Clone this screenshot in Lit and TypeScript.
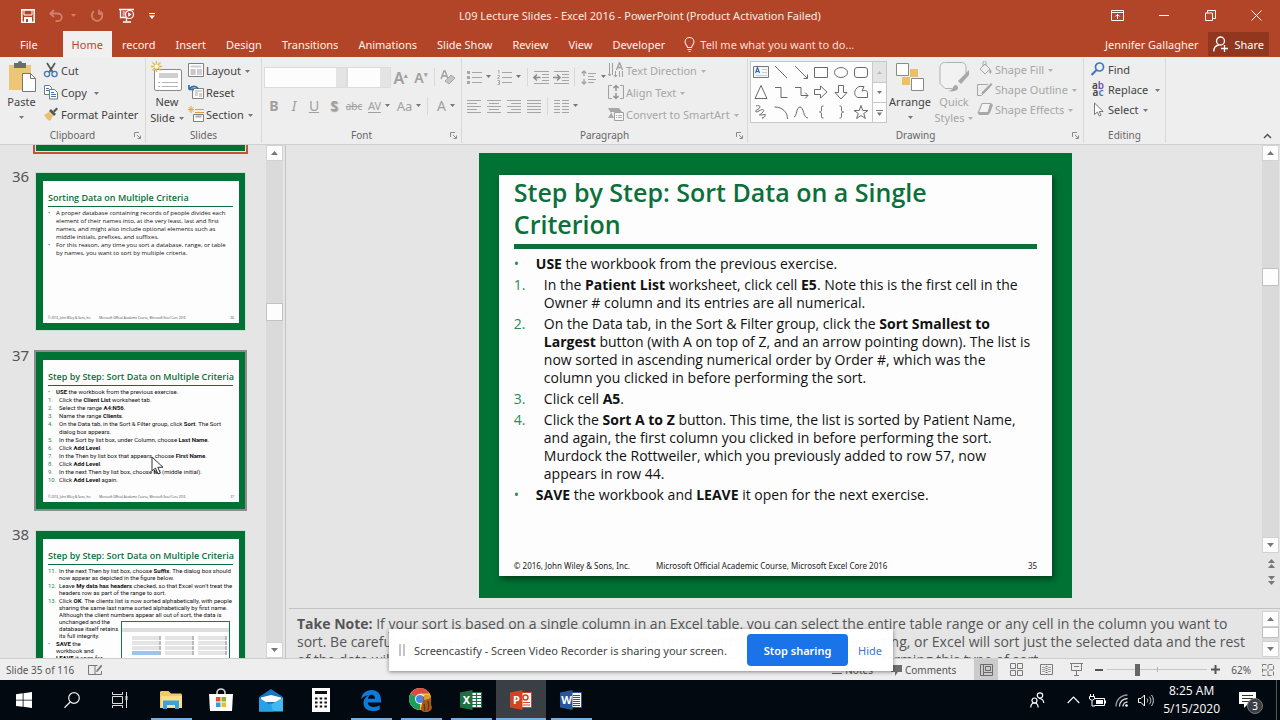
import { LitElement, html, css, svg, nothing } from "lit";
import type { TemplateResult } from "lit";
import { customElement, property } from "lit/decorators.js";
import { classMap } from "lit/directives/class-map.js";

const icon = (w: number, h: number, body: unknown) =>
  html`<svg width=${w} height=${h} viewBox="0 0 ${w} ${h}" fill="none" stroke-width="1" aria-hidden="true">${body}</svg>`;

const caret = html`<svg class="caret" width="5" height="3" viewBox="0 0 5 3" aria-hidden="true"><path d="M0 0h5L2.5 3z" fill="currentColor"/></svg>`;

const lines = (x: number, widths: number[], y: number, step: number, color = "#a6a6a6") =>
  widths.map((w, i) => svg`<path d="M${x} ${y + i * step}h${w}" stroke=${color}/>`);

const I = {
  save: icon(14, 14, svg`<path d="M.8.8h12.4v12.4H.8z" stroke="#fff" stroke-width="1.5"/><path d="M3 1h8v5H3z" stroke="#fff"/><path d="M3 8h8v5H3z" fill="#fff"/><path d="M5 10h2v3H5z" fill="#b24528"/>`),
  undo: icon(14, 13, svg`<path d="M5 1 1.2 4.5 5 8M1.5 4.5H9a3.8 3.8 0 0 1 0 7.6H6.500" stroke="#cf826d" stroke-width="1.800"/>`),
  redo: icon(14, 14, svg`<path d="M4 2.200A5.300 5.300 0 1 0 10.500 2.500M9 .5v4.300h4" stroke="#cf826d" stroke-width="1.800"/>`),
  show: icon(17, 15, svg`<path d="M1 1.500h15M2.500 2v7.500H8M8.500 10v3M5 14h8" stroke="#fff" stroke-width="1.300"/><path d="M4.500 4h3M4.500 6h3M4.500 8h2" stroke="#fff"/><circle cx="11.500" cy="6.500" r="4" fill="#b24528" stroke="#fff" stroke-width="1.200"/><path d="m10.200 4.300 3.500 2.200-3.500 2.200z" fill="#fff"/>`),
  more: icon(6, 6, svg`<path d="M0 .5h6" stroke="#fff"/><path d="M0 2.500h6L3 6z" fill="#fff"/>`),
  ribbonOpts: icon(13, 11, svg`<path d="M.5.5h12v10H.5zM.5 2.500h12M6.500 9V4.500M4.300 6.500l2.200-2.200 2.200 2.200" stroke="#fff"/>`),
  min: icon(11, 11, svg`<path d="M0 5.500h10" stroke="#fff"/>`),
  restore: icon(11, 11, svg`<path d="M.5 3h7v7.500h-7zM2.500 3V.5h8v8h-3" stroke="#fff"/>`),
  close: icon(11, 11, svg`<path d="m.5.5 10 10M10.500.5l-10 10" stroke="#fff"/>`),
  bulb: icon(11, 15, svg`<path d="M3.500 10.500C3.500 8.500 1 7.500 1 5a4.500 4.500 0 0 1 9 0c0 2.500-2.500 3.500-2.500 5.500zM3.500 12.500h4M4.500 14.500h2" stroke="#fbe3dc" stroke-width="1.100"/>`),
  share: icon(16, 16, svg`<circle cx="7.500" cy="5" r="4" stroke="#fff" stroke-width="1.300"/><path d="M.8 15.500c0-4 2-6 5-6.500M11.500 9v7M8 12.500h7" stroke="#fff" stroke-width="1.300"/>`),
  paste: icon(28, 31, svg`<path d="M1 4h22v25H1z" fill="#ecc575"/><path d="M6 2h4a2 2 0 0 1 4 0h4v5H6z" fill="#6b6b6b"/><path d="M14.500 12.500h8l5 5v13h-13z" fill="#fff" stroke="#777"/><path d="M22.500 12.500v5h5" stroke="#777"/>`),
  cut: icon(16, 16, svg`<path d="m4 1 6 9.500M12 1 6 10.500" stroke="#555" stroke-width="1.700"/><circle cx="4" cy="12" r="2.600" stroke="#3f78b8" stroke-width="1.300"/><circle cx="11.500" cy="12" r="2.600" stroke="#3f78b8" stroke-width="1.300"/>`),
  copy: icon(16, 16, svg`<path d="M1.500 1.500h5l2 2v7h-7z" fill="#fff" stroke="#777"/><path d="M3 4.500h3M3 6.500h4" stroke="#3f78b8"/><path d="M6.500 5.500h5l3 3v6.500h-8z" fill="#fff" stroke="#777"/><path d="M8 8.500h3M8 10.500h5M8 12.500h5" stroke="#3f78b8"/>`),
  painter: icon(16, 16, svg`<path d="m1 9 5-3 4 4-3 5c-3-1-4-3-6-6z" fill="#ecc06a"/><path d="m6 5 2-2 5 5-2 2z" fill="#555"/><path d="m10 5 3.500-3.500 1.500 1.500-3.500 3.500z" fill="#555"/>`),
  newSlide: icon(32, 32, svg`<rect x="3.500" y="8.500" width="27" height="21" rx="1.500" fill="#fff" stroke="#8a8a8a"/><path d="M8 12h19v5H8z" fill="#d0d0d0"/><path d="M7 21.500h2M11 21.500h16M7 25.500h2M11 25.500h16" stroke="#b5b5b5"/><path d="M5.500 0v11M0 5.500h11M1.500 1.500l8 8M9.500 1.500l-8 8" stroke="#e8b64c" stroke-width="1.300"/><circle cx="5.500" cy="5.500" r="2" fill="#fff"/>`),
  layout: icon(16, 14, svg`<path d="M.5.5h15v13H.5z" fill="#fff" stroke="#808080"/><path d="M2.500 2.500h11v2h-11zM9 6h5v6H9z" fill="#cfcfcf"/><path d="M2.500 7h5M2.500 9h5M2.500 11h5" stroke="#8f8f8f"/>`),
  reset: icon(16, 15, svg`<path d="M4.500 3.500h11v10h-11z" fill="#fff" stroke="#808080"/><path d="M7 6h7M7 8h3M7 10h3" stroke="#aaa"/><path d="M11 8h3v4h-3z" fill="#cfcfcf"/><path d="M1 4.500h5M1 4.500V0M1.500 4C4 .5 8 .5 10 3.500" stroke="#2f6db3" stroke-width="1.700"/>`),
  section: icon(16, 16, svg`<path d="M7 3.500h9M7 6.500h9" stroke="#e2994b"/><path d="M5.500 8.500h10v7h-10z" fill="#fff" stroke="#808080"/><path d="M7.500 10.500h6" stroke="#aaa" stroke-width="2"/><path d="M3 0v7M0 3.500h6M.8 1.200l4.500 4.500M5.300 1.200.8 5.700" stroke="#e2a64b"/>`),
  launcher: icon(7, 7, svg`<path d="M.5 5V.5H5M3 3l3 3M6.500 3.500v3h-3" stroke="#8a8a8a"/>`),
  eraser: icon(16, 16, svg`<path d="M1 10 4 2h1l3 8M2.300 7h4.400" stroke="#9c9c9c" stroke-width="1.300"/><path d="m5 12 6-6 4 3-6 6z" fill="#c4c4c4" stroke="#a6a6a6"/>`),
  bullets: icon(15, 15, svg`<path d="M0 1h3v3H0zM0 6h3v3H0zM0 11h3v3H0z" fill="#a6a6a6"/>${lines(5, [10, 10, 10], 2.5, 5)}`),
  numbers: icon(15, 15, svg`<path d="M1 .5h1v3M.5 5.500h2v1l-2 2h2M.5 10.500h2v4h-2M1 12.500h1" stroke="#a6a6a6"/>${lines(5, [10, 10, 10], 2.5, 5)}`),
  dedent: icon(16, 15, svg`${lines(1, [15], 1.5, 3)}${lines(9, [7, 7, 7], 4.5, 3)}${lines(1, [15], 13.5, 3)}<path d="M7.500 7.500H1M4 4.500l-3 3 3 3" stroke="#8c8c8c" stroke-width="1.600"/>`),
  indent: icon(16, 15, svg`${lines(1, [15], 1.5, 3)}${lines(9, [7, 7, 7], 4.5, 3)}${lines(1, [15], 13.5, 3)}<path d="M0 7.500h6.500M4 4.500l3 3-3 3" stroke="#8c8c8c" stroke-width="1.600"/>`),
  spacing: icon(16, 15, svg`<path d="M3 1v5M.8 3.200 3 1l2.200 2.200M3 14V9M.8 11.800 3 14l2.200-2.200" stroke="#a0a0a0" stroke-width="1.300"/>${lines(7, [8, 6, 8, 6], 3.5, 3)}`),
  left: icon(14, 15, lines(0, [14, 10, 14, 10, 14], 1.5, 3)),
  center: icon(14, 15, svg`${lines(0, [14, 0, 14, 0, 14], 1.5, 3)}${lines(2, [10], 4.5, 3)}${lines(2, [10], 10.5, 3)}`),
  right: icon(14, 15, svg`${lines(0, [14, 0, 14, 0, 14], 1.5, 3)}${lines(4, [10], 4.5, 3)}${lines(4, [10], 10.5, 3)}`),
  justify: icon(14, 15, lines(0, [14, 14, 14, 14, 14], 1.5, 3)),
  columns: icon(15, 15, svg`${lines(0, [6, 6, 6, 6, 6], 1.5, 3)}${lines(8, [7, 7, 7, 7, 7], 1.5, 3)}`),
  textDir: icon(16, 16, svg`<path d="M1.500 1v12M4.500 1v12M7.500 9v6M11.500 9v6M14.500 9v6M0 12l1.500 2L3 12M6 13l1.500 2L9 13" stroke="#a0a0a0"/><path d="M8.500 8 11.500.5 14.500 8M9.500 5.500h4" stroke="#a0a0a0" stroke-width="1.300"/>`),
  alignText: icon(16, 16, svg`<path d="M4 1.500H.5v13H4M12 1.500h3.500v13H12" stroke="#a0a0a0"/><path d="M8 7V1.500M5.500 4 8 1.500 10.500 4M8 9v5.500M5.500 12 8 14.500l2.500-2.500" stroke="#8f8f8f" stroke-width="1.400"/>`),
  smartArt: icon(16, 14, svg`<path d="M0 1h11l3 4H3l3 6H0l3-5z" fill="#a8a8a8"/><path d="M6.500 5.500h9v8h-9z" fill="#f6f6f6" stroke="#a0a0a0"/><path d="M8 8.500h1M10 8.500h4M8 10.500h1M10 10.500h4" stroke="#b0b0b0"/>`),
  arrange: icon(28, 28, svg`<path d="M14 6h8v8h-8zM6 14h8v8H6z" fill="#e9c06c"/><path d="M.5.5h12v12H.5zM15.500 15.500h12v12h-12z" fill="#fff" stroke="#8a8a8a"/>`),
  quick: icon(32, 32, svg`<path d="M14 27.500H7l-5-5V7c0-4 2-5.500 5.500-5.500H23c4 0 5 2 5 5.500v6" stroke="#b0b0b0" fill="#f2f2f2"/><path d="M31 9 20 20l3 3 8-9z" fill="#a8a8a8"/><path d="M10 30c5 0 4-4 7-6 3 0 4 3 2 5-2 1-5 2-9 1z" fill="#a8a8a8"/>`),
  fill: icon(16, 16, svg`<path d="m3 8 5-5 5 5-5 5zM6 5V1.500a1 1 0 0 1 3 0V5" stroke="#a6a6a6"/><path d="M13 8c2 2 2 4 .5 4.500S12 10 13 8z" fill="#a6a6a6"/>`),
  outline: icon(16, 14, svg`<path d="M11 2.500H.5v11h4l8-8" stroke="#a6a6a6"/><path d="m5 10 9-9 1.500 1.500-8 8.500-3 1z" fill="#a6a6a6"/>`),
  effects: icon(16, 14, svg`<path d="M5 1h9l2 2-3 8-2 2H2L.5 11z" fill="#a8a8a8"/><path d="M5 1.500h8.500L11 10.500H1.500z" fill="#f4f4f4" stroke="#a8a8a8"/>`),
  find: icon(14, 14, svg`<circle cx="8.500" cy="5" r="4" stroke="#3f78b8" stroke-width="1.700"/><path d="m5.500 8-5 5" stroke="#3f78b8" stroke-width="2.200"/>`),
  select: icon(11, 15, svg`<path d="M1.500 1v11.500l3-2.500 1.700 4 1.800-.8L6.300 9.500h3.900z" fill="#fff" stroke="#777"/>`),
  up: icon(9, 6, svg`<path d="m1 5 3.500-3.500L8 5" stroke="#555" stroke-width="1.500"/>`),
  book: icon(15, 12, svg`<path d="M7 1.500H.5v9H7zM7 1.500h2.500M7 10.500h6.500V7" stroke="#777"/><path d="m8 8 .7-2L13 .8 14.300 2 9.800 7.400z" fill="#777"/>`),
  notes: icon(10, 9, svg`<path d="M5 0 2 3h6zM0 5.500h10M0 8.500h10" stroke="#666"/>`),
  comment: icon(11, 12, svg`<path d="M0 1h11v7H7l-3 4V8H0z" fill="#6e6e6e"/>`),
  normal: icon(13, 12, svg`<path d="M.5.5h12v11H.5zM3.500.5v11M5.500 2.500h5v4h-5zM4 8.500h8" stroke="#6a6a6a"/>`),
  sorter: icon(13, 13, svg`<path d="M.5.5h5v5h-5zM7.500.5h5v5h-5zM.5 7.500h5v5h-5zM7.500 7.500h5v5h-5z" stroke="#7a7a7a"/>`),
  reading: icon(13, 13, svg`<path d="M5.500 1.500h-5v10h5M7.500 1.500h5v10h-5" stroke="#7a7a7a"/><path d="M6.500 1v12" stroke="#6a6a6a" stroke-width="2" stroke-dasharray="1 1"/><path d="M2 4.500h3M2 6.500h3M2 8.500h3M8 4.500h3M8 6.500h3M8 8.500h3" stroke="#a0a0a0"/>`),
  slideshow: icon(13, 13, svg`<path d="M0 .5h13M1.500 1v6.500h10V1M4 3.500h5M6.500 8v4M4 12.500h5" stroke="#7a7a7a"/>`),
  fit: icon(12, 12, svg`<path d="M.5.5h11v11H.5z" stroke="#7a7a7a" stroke-dasharray="4 2"/><path d="M6 1v4M6 7v4M1 6h4M7 6h4" stroke="#7a7a7a"/>`),
  cursor: icon(13, 19, svg`<path d="M1 1v14l3.500-3 2.500 6 2.300-1-2.500-5.700H12z" fill="#fff" stroke="#333"/>`),
  win: icon(16, 16, svg`<path d="M0 2.200 6.700 1.300V7.700H0zM7.500 1.200 16 0v7.700H7.500zM0 8.500h6.700v6.300L0 13.900zM7.500 8.500H16V16l-8.500-1.200z" fill="#fff"/>`),
  search: icon(16, 16, svg`<circle cx="10" cy="6" r="5.300" stroke="#eee" stroke-width="1.200"/><path d="M6.200 10 .5 15.700" stroke="#eee" stroke-width="1.300"/>`),
  taskview: icon(16, 16, svg`<path d="M.5 0v2.500h10V0M.5 4.500h10v7H.500zM.5 16v-2.500h10V16M14.500 0v16" stroke="#ddd"/><path d="M13.500 4h2v4h-2z" fill="#ddd"/>`),
  folder: icon(22, 19, svg`<path d="M0 1.500C0 .7.700 0 1.500 0h7L11 2.500h9.500c.8 0 1.500.7 1.500 1.500v13H0z" fill="#f0cb63"/><path d="M1 5h21v12H1z" fill="#fbe08c"/><path d="M3 18V9.500h16V18h-4v-4H7v4z" fill="#36a3dc"/>`),
  store: icon(24, 24, svg`<path d="M8 7V5a4 4 0 0 1 8 0v2" stroke="#d8d8d8" stroke-width="1.600"/><path d="M0 6h24l-1 17H1z" fill="#fff"/><path d="M7 9h4.500v4.500H7z" fill="#e8502c"/><path d="M12.500 9H17v4.500h-4.500z" fill="#7db928"/><path d="M7 14.500h4.500V19H7z" fill="#2d9fe0"/><path d="M12.500 14.500H17V19h-4.500z" fill="#f4b71e"/>`),
  mail: icon(24, 23, svg`<path d="M0 8 12 0l12 8v14H0z" fill="#1478c4"/><path d="M2 8.500 12 6l10 2.500V13H2z" fill="#fff"/><path d="m0 8.500 12 8L0 22.500z" fill="#2aa0e8"/><path d="M0 22.500 24 8.500v14z" fill="#41b8f2"/><path d="m12 14-12 8.500h14z" fill="#2aa0e8"/>`),
  calc: icon(18, 24, svg`<path d="M0 0h18v24H0z" fill="#fff"/><path d="M3 3h12v3H3z" fill="#111"/><path d="M3 10.500h12M3 14.500h12M3 18.500h12" stroke="#111" stroke-width="2" stroke-dasharray="2.500 2.200"/>`),
  edge: icon(20, 21, svg`<path d="M0 9.500C.8 3.500 5 0 10.500 0 16.500 0 20 4.300 20 10v2.500H6.800c.2 3 2.700 4.400 5.900 4.400 2.200 0 4.300-.6 6-1.600v4.200c-1.900 1-4.300 1.500-7 1.500C5.800 21 2.500 17.500 2.500 13c0-3.500 1.800-6 4.800-7.500C4.500 5.600 1.800 7 0 9.500zM7 8.700h7c0-2.300-1.200-4-3.500-4C8.500 4.700 7.200 6.500 7 8.700z" fill="#0f7bd8"/>`),
  chrome: icon(24, 24, svg`<circle cx="11" cy="11" r="11" fill="#e5e5e5"/><path d="M11 11 1.500 5.500A11 11 0 0 1 20.500 5.500z" fill="#dd4b3e"/><path d="M11 11 1.500 5.500A11 11 0 0 0 11 22z" fill="#1c9d58"/><path d="M11 11V22A11 11 0 0 0 20.500 5.500H11z" fill="#f4c531"/><circle cx="11" cy="11" r="5" fill="#fff"/><circle cx="11" cy="11" r="4" fill="#4a86e8"/><path d="M14 9c3-3 7-2 8 1 1 4-1 5 1 9 0 3-3 5-6 5-4 0-6-2-5-5 2-2 0-4 2-6z" fill="#a65a22"/><path d="M15 8c3-2 6-1 7 1l-2 2-5 1z" fill="#d9a020"/><path d="M15 16c1 3 0 5 1 7M19 13c1 3 1 6 0 9" stroke="#6f3412" stroke-width="1.500"/>`),
  people: icon(15, 16, svg`<circle cx="10" cy="3.500" r="2.700" stroke="#fff" stroke-width="1.200"/><circle cx="4.500" cy="8.500" r="2.500" stroke="#fff" stroke-width="1.200"/><path d="M.8 15.500c0-3 1.500-4.500 3.700-4.500s3.500 1.500 3.700 4.500M9 6.500c3 0 4.500 1.500 4.800 4.500" stroke="#fff" stroke-width="1.200"/>`),
  chevUp: icon(13, 8, svg`<path d="m.7 7 5.800-6 5.800 6" stroke="#fff" stroke-width="1.100"/>`),
  battery: icon(17, 13, svg`<path d="M6 4.500h9.500v7H5.500" stroke="#fff"/><path d="M7 6h7v4H7z" fill="#fff"/><path d="M16 6.500h1v3h-1z" fill="#fff"/><path d="M1.500 0v2M4.500 0v2M.5 2.500h5V5L3 6.500.500 5zM3 6.500V12h3" stroke="#fff"/>`),
  wifi: icon(14, 13, svg`<path d="M1 12.500C1 6 6 1 12.500 1" stroke="#9a9a9a" stroke-width="1.300"/><path d="M4.500 12.500c0-4.500 3.500-8 8-8M8 12.500c0-2.500 2-4.500 4.500-4.500" stroke="#ddd" stroke-width="1.300"/><circle cx="11.500" cy="11.500" r="1.300" fill="#fff"/>`),
  volume: icon(16, 13, svg`<path d="M.5 4.500H3L6.500 1v11L3 8.500H.500z" stroke="#fff"/><path d="M9 4.500c1 1.300 1 2.700 0 4M11.300 2.700c2 2.500 2 5 0 7.600M13.500 1c2.500 3.500 2.500 7.500 0 11" stroke="#ddd"/>`),
  action: icon(17, 16, svg`<path d="M0 0h17v12H9l-4 4v-4H0z" fill="#fff"/><path d="M3 3.500h11M3 6.500h11M3 9.500h7" stroke="#333"/>`),
};

const office = (letter: string, color: string, kind: string) => html`
  <span class="office">
    <svg width="22" height="20" viewBox="0 0 22 20" fill="none" aria-hidden="true">
      <path d="M10 2.500h11.500v15H10z" fill="#fff" stroke=${color}/>
      ${kind === "x" ? svg`<path d="M12 5.500h9M12 8.500h9M12 11.500h9M12 14.500h9M16.500 3v14" stroke=${color} stroke-width="1.200"/>` : nothing}
      ${kind === "p" ? svg`<circle cx="15.500" cy="7.500" r="2.500" stroke=${color} stroke-width="1.500"/><path d="M13 12.500h7M13 15h7" stroke=${color} stroke-width="1.200"/>` : nothing}
      ${kind === "w" ? svg`<path d="M13 5.500h7M13 7.500h7M13 9.500h7M13 11.500h7M13 13.500h7M13 15.500h7" stroke=${color}/>` : nothing}
      <path d="M0 2.500 12.500 0v20L0 17.500z" fill=${color}/>
    </svg><b>${letter}</b>
  </span>`;

const shape = (body: unknown) => svg`<g stroke="#6a6a6a">${body}</g>`;
const SHAPES: [string, unknown][] = [
  ["Text box", svg`<path d="M.5 2.500h15v11H.500z" stroke="#777" fill="#f4f8fc"/><path d="m2.500 9 2-5.500 2 5.500M3.300 7.500h2.400" stroke="#2f6db3" stroke-width="1.200"/><path d="M9 5.500h5M9 8.500h5M3 11.500h11" stroke="#ccc"/>`],
  ["Line", shape(svg`<path d="m2 2 12 12"/>`)],
  ["Arrow", shape(svg`<path d="m2 2 12 12M14.500 10.500v4h-4"/>`)],
  ["Rectangle", shape(svg`<path d="M1.500 3.500h13v10h-13z"/>`)],
  ["Oval", shape(svg`<ellipse cx="8" cy="8.500" rx="6.500" ry="5"/>`)],
  ["Rounded rectangle", shape(svg`<rect x="1.500" y="3.500" width="13" height="10" rx="2.500"/>`)],
  ["Triangle", shape(svg`<path d="M8 1.500 14 14.500H2z"/>`)],
  ["Elbow connector", shape(svg`<path d="M2 3.500h6v10h6.500"/>`)],
  ["Elbow arrow", shape(svg`<path d="M2 3.500h6v8h7M12 8.500l3 3-3 3"/>`)],
  ["Right arrow", shape(svg`<path d="M1.500 5.500h6V2l6.500 6-6.500 6v-3.500h-6z"/>`)],
  ["Down arrow", shape(svg`<path d="M5.500 1.500h5v7H14L8 15 2 8.500h3.500z"/>`)],
  ["Freeform", shape(svg`<path d="M6 2.500h5L9 7c3-1 6-1 5.500 3v3.500h-10c-4-2-4-8 1.500-11z"/>`)],
  ["Scribble", shape(svg`<path d="M3 2c6-2 4 3 1 4s-1 3 2 1 6-2 4 1-6 3-2 3 5-2 4 1-4 0-2 3"/>`)],
  ["Arc", shape(svg`<path d="M1.500 3c8 0 13 5 13 12"/>`)],
  ["Curve", shape(svg`<path d="M1 13C4 13 3 3 7 3s3 11 8 11"/>`)],
  ["Left brace", shape(svg`<path d="M10.500 2C8 2 8.500 3 8.500 5S8.500 8 6.500 8c2 0 2 1 2 3s-.5 3 2 3"/>`)],
  ["Right brace", shape(svg`<path d="M6.500 2C9 2 8.500 3 8.500 5s0 3 2 3c-2 0-2 1-2 3s.5 3-2 3"/>`)],
  ["Star", shape(svg`<path d="m8 1.500 1.700 5h5.300l-4.300 3 1.700 5L8 11.500l-4.400 3 1.700-5L1 6.500h5.300z"/>`)],
];

const base = css`
  * { box-sizing: border-box; }
  button { font: inherit; color: inherit; background: none; border: 0; padding: 0; margin: 0; cursor: default; }
  svg { display: block; flex: none; }
`;

/** A vertical scroll bar: two arrow buttons and a thumb on a track. */
@customElement("scroll-bar")
export class ScrollBar extends LitElement {
  @property({ type: Number }) before = 1;
  @property({ type: Number }) after = 1;
  @property({ type: Boolean }) short = false;
  static styles = [base, css`
    :host { display: flex; flex-direction: column; width: 18px; min-height: 0; }
    button, .thumb { width: 17px; height: 16px; flex: none; background: #fdfdfd; border: 1px solid #d2d2d2; display: grid; place-items: center; }
    .thumb { height: 18px; border-color: #c2c2c2; }
    .thumb.short { height: 11px; }
    .track { flex: 1; min-height: 0; background: #dadada; width: 17px; display: flex; flex-direction: column; }
  `];
  render() {
    return html`
      <button aria-label="Scroll up">${icon(7, 4, svg`<path d="M0 4h7L3.500 0z" fill="#777"/>`)}</button>
      <div class="track">
        <span style="flex: ${this.before}"></span>
        <span class=${classMap({ thumb: true, short: this.short })}></span>
        <span style="flex: ${this.after}"></span>
      </div>
      <button aria-label="Scroll down">${icon(7, 4, svg`<path d="M0 0h7L3.500 4z" fill="#777"/>`)}</button>`;
  }
}

type Item = { mark: string; body: unknown };

/** The deck's slide master: green frame, white page, title, rule, list and footer. */
const slidePage = (title: unknown, items: Item[], page: string, figure: unknown = nothing) => html`
  <div class="page">
    <h2>${title}</h2>
    <ul>${items.map(i => html`<li class=${classMap({ dot: i.mark === "•" })}><span class="mark">${i.mark}</span><span>${i.body}</span></li>`)}</ul>
    ${figure}
    <footer><span>© 2016, John Wiley &amp; Sons, Inc.</span><span class="course">Microsoft Official Academic Course, Microsoft Excel Core 2016</span><span>${page}</span></footer>
  </div>`;

const pageStyles = css`
  .page { background: #fdfdfd; height: 100%; display: flex; flex-direction: column; position: relative; font-family: "Open Sans", "Noto Sans", sans-serif; }
  h2 { margin: 0; color: #0b703a; font-weight: 600; white-space: nowrap; }
  ul { list-style: none; margin: 0; padding: 0; display: flex; flex-direction: column; color: #111; flex: 1; min-height: 0; }
  li { display: flex; white-space: nowrap; }
  .mark { color: #2d8a57; flex: none; }
  footer { display: flex; color: #222; white-space: nowrap; }
  footer .course { flex: 1; }
`;

@customElement("slide-thumbs")
export class SlideThumbs extends LitElement {
  static styles = [base, pageStyles, css`
    :host { display: block; flex: 1; min-width: 0; overflow: hidden; }
    ol { list-style: none; margin: 0; padding: 0 21px 0 0; display: flex; flex-direction: column; gap: 22px; }
    .item { display: grid; grid-template-columns: 36px minmax(0, 1fr); }
    .no { font-size: 15px; line-height: 18px; padding-left: 12px; color: #555; margin-top: -6px; }
    .frame { height: 157px; background: #007233; padding: 8px 6px 7px 7px; position: relative; outline: 1px solid #c9e0d2; }
    .frame.hover { outline: 2px solid #8c8c8c; }
    .frame.current { outline: 2px solid #c65338; outline-offset: 1px; }
    .page { padding: 11px 5px 1px; overflow: hidden; }
    h2 { font-size: 9px; line-height: 12px; border-bottom: 1px solid #0b703a; padding: 0 0 2px 0; margin: 0 1px 2px 0; }
    li { font-size: 6px; line-height: 8px; }
    .mark { width: 11px; }
    li.dot .mark { width: 8px; }
    .dense li { font-family: Roboto, "Liberation Sans", sans-serif; }
    .tight ul { gap: 1px; }
    .tight li { line-height: 7px; }
    footer { font-size: 3px; line-height: 8px; color: #444; gap: 8px; }
    .pointer { position: absolute; left: 115px; top: 104px; }
    .dialog { position: absolute; left: 78px; right: 9px; top: 82px; height: 54px; border: 1px solid #0b8048; background: #fff; display: flex; flex-direction: column; gap: 2px; }
    .bar { height: 4px; background: #dedede; margin-top: 6px; }
    .cols { display: grid; grid-template-columns: 1fr 1fr 1fr; gap: 1px 4px; padding: 2px 2px 0 10px; }
    .cols i { height: 4px; background: #e4e4e4; border-right: 2px solid #bbb; }
    .cols i.on { background: #9fc3ea; }
  `];

  firstUpdated() { this.scrollTop = 151; }

  render() {
    const b = (t: string) => html`<b>${t}</b>`;
    return html`<ol>
      <li class="item"><span class="no"></span><div class="frame current"></div></li>
      <li class="item"><span class="no">36</span><div class="frame">${slidePage("Sorting Data on Multiple Criteria", [
        { mark: "•", body: html`A proper database containing records of people divides each<br>element of their names into, at the very least, last and first<br>names, and might also include optional elements such as<br>middle initials, prefixes, and suffixes.` },
        { mark: "•", body: html`For this reason, any time you sort a database, range, or table<br>by names, you want to sort by multiple criteria.` },
      ], "36")}</div></li>
      <li class="item"><span class="no">37</span><div class="frame hover dense">${slidePage("Step by Step: Sort Data on Multiple Criteria", [
        { mark: "•", body: html`${b("USE")} the workbook from the previous exercise.` },
        { mark: "1.", body: html`Click the ${b("Client List")} worksheet tab.` },
        { mark: "2.", body: html`Select the range ${b("A4:N56")}.` },
        { mark: "3.", body: html`Name the range ${b("Clients")}.` },
        { mark: "4.", body: html`On the Data tab, in the Sort &amp; Filter group, click ${b("Sort")}. The Sort<br>dialog box appears.` },
        { mark: "5.", body: html`In the Sort by list box, under Column, choose ${b("Last Name")}.` },
        { mark: "6.", body: html`Click ${b("Add Level")}.` },
        { mark: "7.", body: html`In the Then by list box that appears, choose ${b("First Name")}.` },
        { mark: "8.", body: html`Click ${b("Add Level")}.` },
        { mark: "9.", body: html`In the next Then by list box, choose ${b("MI")} (middle initial).` },
        { mark: "10.", body: html`Click ${b("Add Level")} again.` },
      ], "37")}<span class="pointer">${I.cursor}</span></div></li>
      <li class="item"><span class="no">38</span><div class="frame dense tight">${slidePage("Step by Step: Sort Data on Multiple Criteria", [
        { mark: "11.", body: html`In the next Then by list box, choose ${b("Suffix")}. The dialog box should<br>now appear as depicted in the figure below.` },
        { mark: "12.", body: html`Leave ${b("My data has headers")} checked, so that Excel won’t treat the<br>headers row as part of the range to sort.` },
        { mark: "13.", body: html`Click ${b("OK")}. The clients list is now sorted alphabetically, with people<br>sharing the same last name sorted alphabetically by first name.<br>Although the client numbers appear all out of sort, the data is<br>unchanged and the<br>database itself retains<br>its full integrity.` },
        { mark: "•", body: html`${b("SAVE")} the<br>workbook and<br>${b("LEAVE")} it open for` },
      ], "38", html`<div class="dialog"><div class="bar"></div><div class="cols">${Array.from({ length: 12 }, (_, n) => html`<i class=${classMap({ on: n === 9 })}></i>`)}</div></div>`)}</div></li>
    </ol>`;
  }
}

@customElement("slide-canvas")
export class SlideCanvas extends LitElement {
  static styles = [base, pageStyles, css`
    :host { display: block; height: 100%; aspect-ratio: 4 / 3; background: #007233; padding: 22px 20px; }
    .page { padding: 1px 15px 1px; box-shadow: 2px 3px 6px #00401c; }
    h2 { font-size: 25px; line-height: 32px; padding: 0 0 4px; border-bottom: 5px solid #0b703a; margin: 0 0 6px; }
    ul { gap: 3px; }
    li { font-size: 14px; line-height: 18px; }
    .mark { width: 30px; }
    li.dot .mark { width: 22px; }
    footer { font-family: "Noto Sans", sans-serif; font-size: 8px; line-height: 18px; gap: 26px; }
  `];
  render() {
    const b = (t: string) => html`<b>${t}</b>`;
    return slidePage(html`Step by Step: Sort Data on a Single<br>Criterion`, [
      { mark: "•", body: html`${b("USE")} the workbook from the previous exercise.` },
      { mark: "1.", body: html`In the ${b("Patient List")} worksheet, click cell ${b("E5")}. Note this is the first cell in the<br>Owner # column and its entries are all numerical.` },
      { mark: "2.", body: html`On the Data tab, in the Sort &amp; Filter group, click the ${b("Sort Smallest to")}<br>${b("Largest")} button (with A on top of Z, and an arrow pointing down). The list is<br>now sorted in ascending numerical order by Order #, which was the<br>column you clicked in before performing the sort.` },
      { mark: "3.", body: html`Click cell ${b("A5")}.` },
      { mark: "4.", body: html`Click the ${b("Sort A to Z")} button. This time, the list is sorted by Patient Name,<br>and again, the first column you clicked in before performing the sort.<br>Murdock the Rottweiler, which you previously added to row 57, now<br>appears in row 44.` },
      { mark: "•", body: html`${b("SAVE")} the workbook and ${b("LEAVE")} it open for the next exercise.` },
    ], "35");
  }
}

@customElement("ribbon-bar")
export class RibbonBar extends LitElement {
  static styles = [base, css`
    :host { display: flex; height: 88px; background: #eeeeee; color: #444; border-bottom: 1px solid #d0d0d0; font-size: 11px; }
    .caret { display: inline-block; margin: 0 0 2px 4px; color: #777; }
    .group { display: grid; grid-template-rows: minmax(0, 1fr) 16px; border-right: 1px solid #d8d8d8; padding-top: 1px; margin: 1px 0; }
    .body { display: flex; min-width: 0; }
    .label { position: relative; display: flex; justify-content: center; align-items: center; font-size: 10px; color: #666; }
    .label button { position: absolute; right: 4px; top: 5px; }
    .list { display: flex; flex-direction: column; }
    .list button { height: 22px; display: flex; align-items: center; gap: 2px; white-space: nowrap; }
    .list.drawing button { height: 20px; }
    .list .ic { width: 16px; display: grid; place-items: center; }
    .big { display: flex; flex-direction: column; align-items: center; line-height: 16px; white-space: nowrap; }
    .big .pic { height: 35px; display: grid; place-items: center; }
    .big > .caret { margin: 6px 0 0; }
    .off { color: #a6a6a6; }
    .off .caret { color: #b0b0b0; }
    .rows { display: flex; flex-direction: column; gap: 9px; padding-top: 8px; color: #a0a0a0; }
    .row { display: flex; align-items: center; height: 20px; }
    .row button { width: 20px; height: 20px; display: grid; place-items: center; flex: none; white-space: nowrap; }
    .row .wide { width: 30px; display: flex; align-items: center; justify-content: center; }
    .row .sep { width: 1px; height: 18px; background: #d8d8d8; margin: 0 3px; }
    .letters { font-size: 14px; line-height: 20px; }
    .letters .strike { font-size: 10px; text-decoration: line-through; }
    .shadow { text-shadow: 1px 1px 1px #aaa; }
    .und { text-decoration: underline; }
    .av { font-size: 11px; border-bottom: 1px solid; line-height: 13px; }
    .aa { font-size: 13px; }
    .grow { font-size: 16px; font-weight: 600; }
    .shrink { font-size: 14px; font-weight: 600; }
    sup { font-size: 7px; line-height: 0; }
    .combo { appearance: none; height: 21px; border: 1px solid #dcdcdc; border-radius: 0; }
    .combo { background: linear-gradient(#e4e4e4, #e4e4e4) right / 10px 100% no-repeat, #fdfdfd; }
    .font-name { width: 83px; }
    .font-size { width: 44px; }
    .gallery { display: grid; grid-template-columns: 121px 14px; border: 1px solid #c8c8c8; background: #fdfdfd; height: 62px; margin-top: 2px; }
    .shapes { display: grid; grid-template-columns: repeat(6, 20px); grid-auto-rows: 20px; }
    .shapes button, .nav button { display: grid; place-items: center; }
    .nav { display: grid; grid-template-rows: 1fr 1fr 1fr; border-left: 1px solid #c8c8c8; }
    .nav button + button { border-top: 1px solid #c8c8c8; }
    .nav button:first-child { background: #e4e4e4; color: #bbb; }
    .nav .caret { margin: 0; }
    .abac { font-size: 10px; line-height: 7px; font-weight: 600; text-align: center; }
    .abac i { font-style: normal; color: #7d4fb0; }
    .abac u { text-decoration: none; color: #3f78b8; }
    .clip { width: 146px; } .slides { width: 116px; } .fontg { width: 200px; } .para { width: 286px; } .draw { width: 336px; } .edit { width: 82px; }
    .clip .big { width: 43px; } .slides .big { width: 42px; } .draw .big { width: 42px; } .draw .arr { width: 46px; }
    .fontg .body { padding-left: 2px; } .para .body { padding-left: 2px; }
    .draw .body { padding-left: 2px; } .draw .list { padding-left: 2px; }
    .edit .list { padding-left: 6px; }
    .end { flex: 1; display: flex; align-items: flex-end; justify-content: flex-end; padding: 0 8px 5px; }
  `];

  private small(ic: unknown, text: string, drop = false, off = false) {
    return html`<button class=${classMap({ off })}><span class="ic">${ic}</span><span>${text}${drop ? caret : nothing}</span></button>`;
  }
  private group(cls: string, label: string, body: TemplateResult, launch = true) {
    return html`<section class="group ${cls}"><div class="body">${body}</div>
      <div class="label">${label}${launch ? html`<button aria-label="${label} options">${I.launcher}</button>` : nothing}</div></section>`;
  }

  render() {
    const s = this.small;
    return html`
      ${this.group("clip", "Clipboard", html`
        <button class="big"><span class="pic">${I.paste}</span>Paste${caret}</button>
        <div class="list">${s(I.cut, "Cut")}${s(I.copy, "Copy ", true)}${s(I.painter, "Format Painter")}</div>`)}
      ${this.group("slides", "Slides", html`
        <button class="big"><span class="pic">${I.newSlide}</span>New<span>Slide${caret}</span></button>
        <div class="list">${s(I.layout, "Layout", true)}${s(I.reset, "Reset")}${s(I.section, "Section", true)}</div>`, false)}
      ${this.group("fontg", "Font", html`
        <div class="rows">
          <div class="row">
            <select class="combo font-name" aria-label="Font"></select>
            <select class="combo font-size" aria-label="Font size"></select>
            <button class="grow" aria-label="Increase font size"><span>A<sup>▴</sup></span></button>
            <button class="shrink" aria-label="Decrease font size"><span>A<sup>▾</sup></span></button>
            <span class="sep"></span><button aria-label="Clear formatting">${I.eraser}</button>
          </div>
          <div class="row letters">
            <button><b>B</b></button><button><i>I</i></button><button class="und">U</button><button class="shadow"><b>S</b></button>
            <button class="strike">abc</button><button class="wide"><span class="av">AV</span>${caret}</button>
            <button class="wide"><span class="aa">Aa</span>${caret}</button><span class="sep"></span><button class="wide">A${caret}</button>
          </div>
        </div>`)}
      ${this.group("para", "Paragraph", html`
        <div class="rows">
          <div class="row">
            <button class="wide" aria-label="Bullets">${I.bullets}${caret}</button><button class="wide" aria-label="Numbering">${I.numbers}${caret}</button>
            <span class="sep"></span><button aria-label="Decrease indent">${I.dedent}</button><button aria-label="Increase indent">${I.indent}</button>
            <span class="sep"></span><button class="wide" aria-label="Line spacing">${I.spacing}${caret}</button>
          </div>
          <div class="row">
            <button aria-label="Align left">${I.left}</button><button aria-label="Center">${I.center}</button><button aria-label="Align right">${I.right}</button><button aria-label="Justify">${I.justify}</button>
            <span class="sep"></span><button class="wide" aria-label="Columns">${I.columns}${caret}</button>
          </div>
        </div>
        <div class="list">${s(I.textDir, "Text Direction", true, true)}${s(I.alignText, "Align Text", true, true)}${s(I.smartArt, "Convert to SmartArt", true, true)}</div>`)}
      ${this.group("draw", "Drawing", html`
        <div class="gallery">
          <div class="shapes">${SHAPES.map(([n, g]) => html`<button aria-label=${n}>${icon(16, 16, g)}</button>`)}</div>
          <div class="nav"><button aria-label="Previous shapes">${icon(5, 3, svg`<path d="M0 3h5L2.500 0z" fill="#bbb"/>`)}</button><button aria-label="Next shapes">${caret}</button><button aria-label="All shapes">${icon(7, 6, svg`<path d="M0 .5h7" stroke="#777"/><path d="M1 2.500h5L3.500 6z" fill="#777"/>`)}</button></div>
        </div>
        <button class="big arr"><span class="pic">${I.arrange}</span>Arrange${caret}</button>
        <button class="big off"><span class="pic">${I.quick}</span>Quick<span>Styles${caret}</span></button>
        <div class="list drawing">${s(I.fill, "Shape Fill", true, true)}${s(I.outline, "Shape Outline", true, true)}${s(I.effects, "Shape Effects", true, true)}</div>`)}
      ${this.group("edit", "Editing", html`
        <div class="list drawing">${s(I.find, "Find")}${s(html`<span class="abac">a<i>b</i><br>a<u>c</u></span>`, "Replace ", true)}${s(I.select, "Select", true)}</div>`, false)}
      <div class="end"><button aria-label="Collapse the ribbon">${I.up}</button></div>`;
  }
}

@customElement("app-root")
export class AppRoot extends LitElement {
  static styles = [base, css`
    :host { display: flex; flex-direction: column; height: 100vh; overflow: hidden; position: relative; font-family: "Noto Sans", "Open Sans", sans-serif; font-size: 11px; color: #444; background: #e5e5e5; }
    .title { height: 31px; background: #b24528; color: #fbe9e4; display: grid; grid-template-columns: 1fr auto 1fr; align-items: center; }
    .quick { display: flex; align-items: center; padding-left: 21px; gap: 14px; }
    .quick .undo { display: flex; align-items: center; gap: 8px; color: #cf826d; }
    .title h1 { font-size: 11px; font-weight: 400; margin: 0; white-space: nowrap; }
    .window { display: flex; justify-content: flex-end; align-items: center; gap: 35px; padding-right: 18px; }
    .tabs { height: 26px; background: #b24528; color: #fdf0ec; display: flex; align-items: stretch; white-space: nowrap; }
    .tabs button { padding: 0 10px; }
    .tabs .file { padding: 0 25px 0 20px; }
    .tabs .on { background: #f0f0f0; color: #b7472a; padding: 0 9px; }
    .tell { display: flex; align-items: center; gap: 5px; color: #fbdcd3; flex: 1; padding-left: 9px; }
    .tell input { font: inherit; background: none; border: 0; padding: 0; color: inherit; width: 200px; outline: 0; }
    .tell input::placeholder { color: inherit; opacity: 1; }
    .user { display: flex; align-items: center; }
    .tabs .share { display: flex; align-items: center; gap: 5px; background: #91371f; margin: 1px 11px 1px 10px; padding: 0 5px; color: #fff; }
    main { flex: 1; min-height: 0; display: grid; grid-template-columns: 286px 1fr; }
    .thumbs { display: flex; min-height: 0; border-right: 1px solid #c3c3c3; padding-right: 1px; }
    .work { display: grid; grid-template-rows: 1fr 50px; min-height: 0; min-width: 0; }
    .stage { display: flex; min-height: 0; }
    .canvas { flex: 1; display: flex; justify-content: center; padding: 8px 0 10px 3px; min-height: 0; }
    .side { display: flex; flex-direction: column; padding-bottom: 23px; }
    .side scroll-bar { flex: 1; }
    .jump { display: flex; flex-direction: column; gap: 8px; align-items: center; padding: 6px 0 0; }
    .notes { border-top: 1px solid #c3c3c3; display: flex; margin-left: 3px; }
    .notes p { flex: 1; margin: 0; padding: 6px 0 0 8px; font-family: "Open Sans", "Noto Sans", sans-serif; font-size: 14px; line-height: 18px; white-space: nowrap; overflow: hidden; color: #555; }
    .notes scroll-bar { padding: 2px 0 1px; }
    .status { height: 22px; background: #eeeeee; border-top: 1px solid #cdcdcd; display: flex; align-items: center; color: #555; font-size: 10px; }
    .status .left { flex: 1; display: flex; align-items: center; gap: 14px; padding-left: 6px; }
    .status button { display: flex; align-items: center; justify-content: center; gap: 3px; height: 21px; }
    .status .notes-btn { margin-right: 18px; }
    .views { display: flex; padding: 0 4px 0 15px; }
    .views button { width: 30px; }
    .views .on { background: #cbcbcb; width: 24px; margin: 0 3px; }
    .zoom { display: flex; align-items: center; gap: 4px; }
    .zoom .pct { margin: 0 0 0 7px; }
    .zoom input { appearance: none; width: 100px; height: 12px; margin: 0; background: linear-gradient(#b5b5b5, #b5b5b5) center / 1px 5px no-repeat, linear-gradient(#c6c6c6, #c6c6c6) center / 100% 1px no-repeat; }
    .zoom input::-webkit-slider-thumb { appearance: none; width: 5px; height: 12px; background: #666; }
    .fit { margin: 0 6px 0 11px; }
    .taskbar { height: 40px; background: #030911; display: flex; color: #fff; }
    .sys { display: flex; padding-right: 2px; }
    .sys button { width: 48px; display: grid; place-items: center; }
    .apps { display: flex; flex: 1; }
    .apps button { width: 50px; display: grid; place-items: center; position: relative; }
    .apps .run::after { content: ""; position: absolute; left: 5px; right: 4px; bottom: 0; height: 2px; background: #76aee0; }
    .apps .active { background: #3a3f45; }
    .apps .active::after { left: 0; right: 0; }
    .office { position: relative; display: block; }
    .office b { position: absolute; left: 0; width: 13px; top: 2px; text-align: center; font-size: 11px; line-height: 16px; }
    .tray { display: flex; align-items: center; gap: 9px; }
    .tray .people { margin-right: 13px; }
    .clock { text-align: center; font-family: "Open Sans", "Noto Sans", sans-serif; font-size: 12px; line-height: 18px; white-space: nowrap; }
    .center { position: relative; margin: 0 11px 0 10px; }
    .count { position: absolute; left: 8px; top: 6px; width: 16px; height: 16px; border-radius: 50%; background: #3a3f45; border: 1px solid #777; font-size: 10px; line-height: 14px; text-align: center; }
    .edge { width: 1px; height: 40px; background: #555; margin-right: 3px; }
    .banner { position: absolute; left: 50%; transform: translateX(-50%); margin-left: 1px; bottom: 49px; width: 504px; height: 42px; background: rgba(255, 255, 255, .98); box-shadow: 0 1px 4px rgba(0, 0, 0, .45); display: flex; align-items: center; padding: 0 11px 0 10px; white-space: nowrap; color: #444; }
    .grip { width: 6px; height: 12px; border: solid #c4c4c4; border-width: 0 2px; margin-right: 9px; }
    .banner span { flex: 1; }
    .stop { background: #1a73e8; color: #fff; font-weight: 600; width: 101px; height: 32px; border-radius: 4px; }
    .banner a { color: #3a78d0; text-decoration: none; margin-left: 10px; }
  `];

  render() {
    const tabs = ["record", "Insert", "Design", "Transitions", "Animations", "Slide Show", "Review", "View", "Developer"];
    return html`
      <header class="title">
        <div class="quick">
          <button aria-label="Save">${I.save}</button><button class="undo" aria-label="Undo">${I.undo}${caret}</button>
          <button aria-label="Redo">${I.redo}</button><button aria-label="Start slide show">${I.show}</button><button aria-label="Customize toolbar">${I.more}</button>
        </div>
        <h1>L09 Lecture Slides - Excel 2016 - PowerPoint (Product Activation Failed)</h1>
        <div class="window">
          <button aria-label="Ribbon options">${I.ribbonOpts}</button><button aria-label="Minimize">${I.min}</button><button aria-label="Restore">${I.restore}</button><button aria-label="Close">${I.close}</button>
        </div>
      </header>
      <nav class="tabs">
        <button class="file">File</button><button class="on">Home</button>${tabs.map(t => html`<button>${t}</button>`)}
        <label class="tell">${I.bulb}<input aria-label="Tell me what you want to do" placeholder="Tell me what you want to do..."></label>
        <span class="user">Jennifer Gallagher</span><button class="share">${I.share}Share</button>
      </nav>
      <ribbon-bar></ribbon-bar>
      <main>
        <aside class="thumbs"><slide-thumbs></slide-thumbs><scroll-bar .before=${142} .after=${322}></scroll-bar></aside>
        <section class="work">
          <div class="stage">
            <div class="canvas"><slide-canvas></slide-canvas></div>
            <div class="side"><scroll-bar .before=${107} .after=${251}></scroll-bar>
              <div class="jump">
                <button aria-label="Previous slide">${icon(7, 9, svg`<path d="M0 4h7L3.500 0zM0 9h7L3.500 5z" fill="#777"/>`)}</button>
                <button aria-label="Next slide">${icon(7, 9, svg`<path d="M0 0h7L3.500 4zM0 5h7L3.500 9z" fill="#777"/>`)}</button>
              </div>
            </div>
          </div>
          <div class="notes">
            <p><b>Take Note:</b> If your sort is based on a single column in an Excel table, you can select the entire table range or any cell in the column you want to<br>sort. Be careful not to select only a single column of the ranges within the table before sorting, or Excel will sort just the selected data and the rest<br>of the data will not be sorted along with it. Check all of the results carefully again after performing this type of sort.</p>
            <scroll-bar .before=${0} .after=${1} short></scroll-bar>
          </div>
        </section>
      </main>
      <footer class="status">
        <div class="left"><span>Slide 35 of 116</span>${I.book}</div>
        <button class="notes-btn">${I.notes}Notes</button><button>${I.comment}Comments</button>
        <div class="views"><button class="on" aria-label="Normal">${I.normal}</button><button aria-label="Slide sorter">${I.sorter}</button><button aria-label="Reading view">${I.reading}</button><button aria-label="Slide show">${I.slideshow}</button></div>
        <div class="zoom">
          <button aria-label="Zoom out">${icon(8, 8, svg`<path d="M0 4h8" stroke="#555" stroke-width="2"/>`)}</button>
          <input type="range" min="0" max="100" value="29" aria-label="Zoom">
          <button aria-label="Zoom in">${icon(9, 9, svg`<path d="M0 4.500h9M4.500 0v9" stroke="#555" stroke-width="2"/>`)}</button>
          <span class="pct">62%</span>
        </div>
        <button class="fit" aria-label="Fit slide">${I.fit}</button>
      </footer>
      <footer class="taskbar">
        <div class="sys"><button aria-label="Start">${I.win}</button><button aria-label="Search">${I.search}</button><button aria-label="Task view">${I.taskview}</button></div>
        <div class="apps">
          <button class="run" aria-label="File Explorer">${I.folder}</button><button aria-label="Store">${I.store}</button><button aria-label="Mail">${I.mail}</button><button aria-label="Calculator">${I.calc}</button>
          <button class="run" aria-label="Edge">${I.edge}</button><button class="run" aria-label="Chrome">${I.chrome}</button>
          <button class="run" aria-label="Excel">${office("X", "#1f7145", "x")}</button><button class="run active" aria-label="PowerPoint">${office("P", "#d04423", "p")}</button><button class="run" aria-label="Word">${office("W", "#2a5699", "w")}</button>
        </div>
        <div class="tray">
          <button class="people" aria-label="People">${I.people}</button><button aria-label="Hidden icons">${I.chevUp}</button><button aria-label="Battery">${I.battery}</button><button aria-label="Network">${I.wifi}</button><button aria-label="Volume">${I.volume}</button>
          <div class="clock">8:25 AM<br>5/15/2020</div>
          <button class="center" aria-label="Notifications">${I.action}<span class="count">3</span></button>
          <span class="edge"></span>
        </div>
      </footer>
      <div class="banner" role="status"><i class="grip"></i><span>Screencastify - Screen Video Recorder is sharing your screen.</span><button class="stop">Stop sharing</button><a href="#hide">Hide</a></div>`;
  }
}
